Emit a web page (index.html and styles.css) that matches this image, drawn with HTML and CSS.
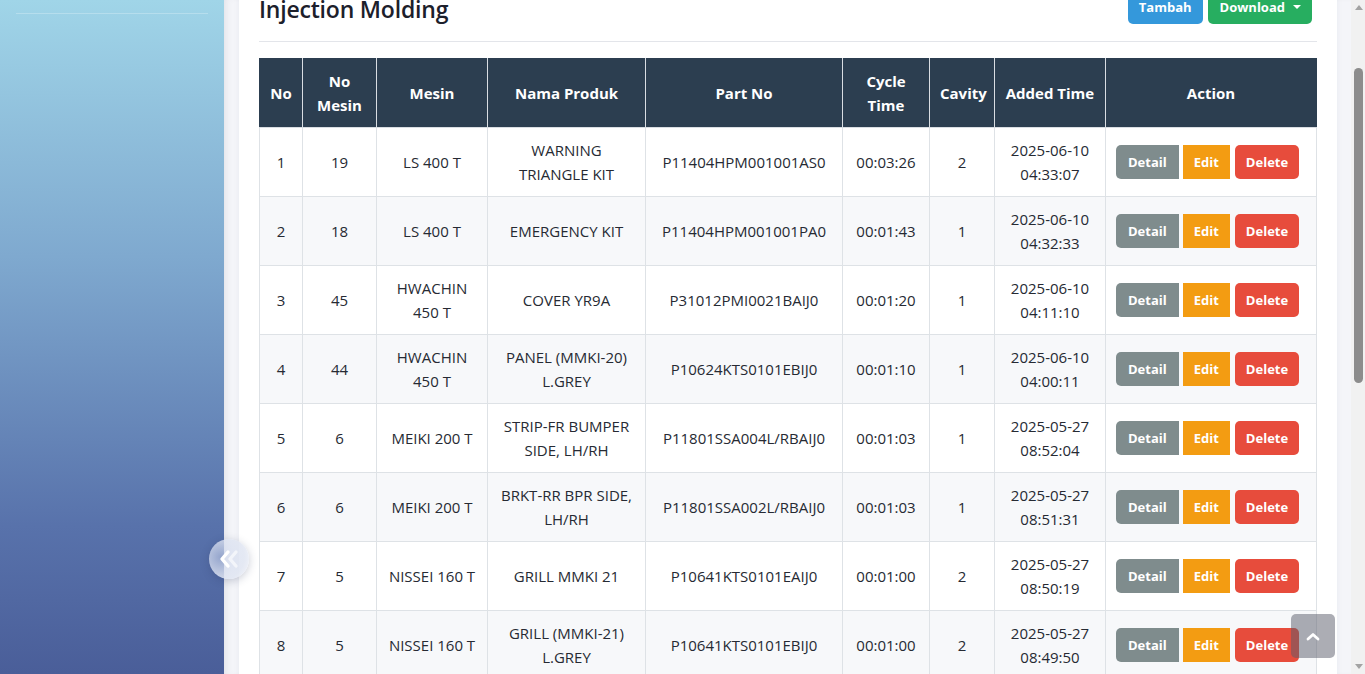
FILE: index.html
```html
<!DOCTYPE html>
<html lang="id">
<head>
<meta charset="utf-8">
<title>Injection Molding</title>
<link rel="stylesheet" href="styles.css">
</head>
<body>
<div class="app">
  <aside class="sidebar">
    <div class="sidebar-divider"></div>
    <button class="sidebar-toggle" aria-label="Toggle sidebar">
      <svg width="24" height="20" viewBox="0 0 24 20"><polyline points="10,3 4,10 10,17" fill="none" stroke="#fff" stroke-width="3.4" stroke-linecap="round" stroke-linejoin="round"/><polyline points="18,3 12,10 18,17" fill="none" stroke="rgba(255,255,255,0.6)" stroke-width="3.4" stroke-linecap="round" stroke-linejoin="round"/></svg>
    </button>
  </aside>
  <main class="main">
    <section class="card">
      <div class="card-head">
        <h3 class="title">Injection Molding</h3>
        <div class="head-actions">
          <button class="btn btn-blue">Tambah</button>
          <button class="btn btn-green">Download <span class="caret"></span></button>
        </div>
      </div>
      <hr class="divider">
      <table class="data">
        <colgroup>
          <col style="width:43px"><col style="width:74px"><col style="width:111px"><col style="width:158px"><col style="width:197px"><col style="width:87px"><col style="width:65px"><col style="width:111px"><col style="width:211px">
        </colgroup>
        <thead>
          <tr><th>No</th><th>No Mesin</th><th>Mesin</th><th>Nama Produk</th><th>Part No</th><th>Cycle Time</th><th>Cavity</th><th class="nw">Added Time</th><th>Action</th></tr>
        </thead>
        <tbody>
          <tr><td>1</td><td>19</td><td>LS 400 T</td><td>WARNING TRIANGLE KIT</td><td>P11404HPM001001AS0</td><td>00:03:26</td><td>2</td><td>2025-06-10 04:33:07</td><td class="act"><span class="b b-gray">Detail</span><span class="b b-orange">Edit</span><span class="b b-red">Delete</span></td></tr>
          <tr><td>2</td><td>18</td><td>LS 400 T</td><td>EMERGENCY KIT</td><td>P11404HPM001001PA0</td><td>00:01:43</td><td>1</td><td>2025-06-10 04:32:33</td><td class="act"><span class="b b-gray">Detail</span><span class="b b-orange">Edit</span><span class="b b-red">Delete</span></td></tr>
          <tr><td>3</td><td>45</td><td>HWACHIN 450 T</td><td>COVER YR9A</td><td>P31012PMI0021BAIJ0</td><td>00:01:20</td><td>1</td><td>2025-06-10 04:11:10</td><td class="act"><span class="b b-gray">Detail</span><span class="b b-orange">Edit</span><span class="b b-red">Delete</span></td></tr>
          <tr><td>4</td><td>44</td><td>HWACHIN 450 T</td><td>PANEL (MMKI-20) L.GREY</td><td>P10624KTS0101EBIJ0</td><td>00:01:10</td><td>1</td><td>2025-06-10 04:00:11</td><td class="act"><span class="b b-gray">Detail</span><span class="b b-orange">Edit</span><span class="b b-red">Delete</span></td></tr>
          <tr><td>5</td><td>6</td><td>MEIKI 200 T</td><td>STRIP-FR BUMPER SIDE, LH/RH</td><td>P11801SSA004L/RBAIJ0</td><td>00:01:03</td><td>1</td><td>2025-05-27 08:52:04</td><td class="act"><span class="b b-gray">Detail</span><span class="b b-orange">Edit</span><span class="b b-red">Delete</span></td></tr>
          <tr><td>6</td><td>6</td><td>MEIKI 200 T</td><td>BRKT-RR BPR SIDE, LH/RH</td><td>P11801SSA002L/RBAIJ0</td><td>00:01:03</td><td>1</td><td>2025-05-27 08:51:31</td><td class="act"><span class="b b-gray">Detail</span><span class="b b-orange">Edit</span><span class="b b-red">Delete</span></td></tr>
          <tr><td>7</td><td>5</td><td>NISSEI 160 T</td><td>GRILL MMKI 21</td><td>P10641KTS0101EAIJ0</td><td>00:01:00</td><td>2</td><td>2025-05-27 08:50:19</td><td class="act"><span class="b b-gray">Detail</span><span class="b b-orange">Edit</span><span class="b b-red">Delete</span></td></tr>
          <tr><td>8</td><td>5</td><td>NISSEI 160 T</td><td>GRILL (MMKI-21) L.GREY</td><td>P10641KTS0101EBIJ0</td><td>00:01:00</td><td>2</td><td>2025-05-27 08:49:50</td><td class="act"><span class="b b-gray">Detail</span><span class="b b-orange">Edit</span><span class="b b-red">Delete</span></td></tr>
        </tbody>
      </table>
    </section>
  </main>
  <div class="vscroll">
    <span class="arrow-up"></span>
    <span class="thumb"></span>
    <span class="arrow-down"></span>
  </div>
</div>
<a class="scroll-top" href="#" aria-label="Scroll to top">
  <svg width="14" height="9" viewBox="0 0 14 9"><polyline points="2,7 7,2.5 12,7" fill="none" stroke="#fff" stroke-width="2.8" stroke-linecap="round" stroke-linejoin="round"/></svg>
</a>
</body>
</html>
```
FILE: styles.css
```css
* { box-sizing: border-box; }
html, body { margin: 0; padding: 0; height: 100%; overflow: hidden; }
body {
  font-family: "Open Sans", "Noto Sans", "Liberation Sans", sans-serif;
  font-size: 15px;
  line-height: 24px;
  color: #262a33;
  background: #f4f5f9;
}
.app { display: flex; height: 674px; }
.sidebar {
  width: 224px;
  flex: 0 0 224px;
  position: relative;
  background: linear-gradient(180deg, #a0d5e8 0%, #7fa9cf 38%, #5872ab 78%, #4a5e99 100%);
  padding-top: 13px;
}
.sidebar-divider {
  margin: 0 16px;
  border-top: 1px solid rgba(255,255,255,0.25);
}
.sidebar-toggle {
  position: absolute;
  left: 209px;
  top: 539px;
  width: 40px;
  height: 40px;
  border-radius: 50%;
  border: 0;
  padding: 0 0 0 1px;
  display: flex;
  align-items: center;
  justify-content: center;
  background: radial-gradient(circle at 30% 45%, rgba(200,210,235,0.55), rgba(225,230,242,0.9) 65%, rgba(245,246,250,0.98));
  box-shadow: 0 2px 8px rgba(40,50,90,0.25);
  z-index: 5;
}
.main {
  flex: 1;
  padding: 0 14px 0 15px;
  box-shadow: inset 6px 0 8px -6px rgba(60,60,90,0.15);
}
.card {
  margin-top: -30px;
  background: #fff;
  padding: 20px;
  box-shadow: 0 0 6px rgba(40,45,80,0.06);
}
.card-head {
  display: flex;
  justify-content: space-between;
  align-items: center;
  height: 34px;
}
.title {
  margin: 4px 0 0;
  font-size: 23px;
  font-weight: 600;
  line-height: 30px;
  color: #1c202b;
  letter-spacing: -0.2px;
}
.head-actions { display: flex; gap: 5px; padding-right: 5px; }
.btn {
  border: 0;
  border-radius: 5px;
  color: #fff;
  font-family: inherit;
  font-weight: 700;
  font-size: 13px;
  line-height: 20px;
  padding: 7px 11px;
  height: 34px;
  display: flex;
  align-items: center;
}
.btn-blue { background: #3498db; }
.btn-green { background: #27ae60; padding: 7px 11px 7px 12px; }
.caret {
  display: inline-block;
  margin-left: 8px;
  border-left: 4px solid transparent;
  border-right: 4px solid transparent;
  border-top: 4px solid #fff;
}
.divider {
  margin: 17px 0 16px;
  border: 0;
  border-top: 1px solid #e3e5ea;
}
.data {
  width: 100%;
  table-layout: fixed;
  border-collapse: collapse;
  border: 1px solid #dee2e6;
}
.data th, .data td {
  border: 1px solid #dee2e6;
  padding: 10px 10px;
  text-align: center;
  vertical-align: middle;
}
.data th {
  background: #2c3e50;
  color: #fff;
  font-weight: 700;
  border-color: #d9dde2;
  border-top-color: #2c3e50;
}
.data th:first-child { border-left-color: #2c3e50; }
.data th:last-child { border-right-color: #2c3e50; }
.data th.nw { white-space: nowrap; padding-left: 6px; padding-right: 6px; }
.data tbody tr:nth-child(even) td { background: #f7f8fa; }
.data td.act {
  text-align: left;
  padding-left: 10px;
  padding-right: 6px;
}
.act { white-space: nowrap; }
.b {
  display: inline-block;
  color: #fff;
  font-weight: 700;
  font-size: 13px;
  line-height: 20px;
  padding: 7px 11px;
  vertical-align: middle;
}
.b-gray { background: #7f8c8d; border-radius: 5px 0 0 5px; margin-right: 4px; padding: 7px 12px; }
.b-orange { background: #f39c12; margin-right: 5px; }
.b-red { background: #e74c3c; border-radius: 5px; }
.vscroll {
  flex: 0 0 15px;
  background: #f1f1f1;
  position: relative;
  display: flex;
  flex-direction: column;
  align-items: center;
}
.arrow-up {
  margin-top: 5px;
  border-left: 4px solid transparent;
  border-right: 4px solid transparent;
  border-bottom: 5px solid #a3a3a3;
}
.thumb {
  margin-top: 58px;
  width: 9px;
  height: 315px;
  border-radius: 5px;
  background: #8c8c8c;
}
.arrow-down {
  margin-top: auto;
  margin-bottom: 5px;
  border-left: 4px solid transparent;
  border-right: 4px solid transparent;
  border-top: 5px solid #a3a3a3;
}
.scroll-top {
  position: fixed;
  left: 1291px;
  top: 614px;
  width: 44px;
  height: 44px;
  border-radius: 5px;
  background: rgba(90,92,105,0.5);
  display: flex;
  align-items: center;
  justify-content: center;
}
```
